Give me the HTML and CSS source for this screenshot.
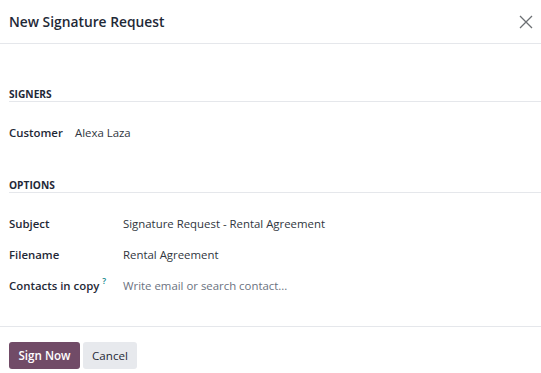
FILE: index.html
```html
<!DOCTYPE html>
<html>
<head>
<meta charset="utf-8">
<link rel="stylesheet" href="styles.css">
</head>
<body>
<div class="modal">
  <header class="modal-header">
    <h4 class="title">New Signature Request</h4>
    <svg class="close" width="14" height="14" viewBox="0 0 14 14"><path d="M1 1L13 13M13 1L1 13" stroke="#6c6f73" stroke-width="1.3" fill="none"/></svg>
  </header>
  <main class="modal-body">
    <section class="group">
      <div class="sep">SIGNERS</div>
      <div class="row signer">
        <span class="label short">Customer</span>
        <span class="value">Alexa Laza</span>
      </div>
    </section>
    <section class="group options">
      <div class="sep">OPTIONS</div>
      <div class="row">
        <span class="label">Subject</span>
        <span class="value">Signature Request - Rental Agreement</span>
      </div>
      <div class="row">
        <span class="label">Filename</span>
        <span class="value">Rental Agreement</span>
      </div>
      <div class="row">
        <span class="label">Contacts in copy<sup class="help">?</sup></span>
        <span class="value placeholder">Write email or search contact...</span>
      </div>
    </section>
  </main>
  <footer class="modal-footer">
    <button class="btn primary">Sign Now</button>
    <button class="btn secondary">Cancel</button>
  </footer>
</div>
</body>
</html>
```
FILE: styles.css
```css
* { box-sizing: border-box; }
html, body { margin: 0; padding: 0; background: #fff; }
body {
  font-family: "Open Sans", "Noto Sans", sans-serif;
  color: #374151;
  font-size: 11.4px;
}
.modal { width: 541px; height: 373px; display: flex; flex-direction: column; }
.modal-header {
  height: 44px;
  display: flex;
  align-items: center;
  justify-content: space-between;
  padding: 0 8px 0 9px;
  border-bottom: 1px solid #e5e7eb;
}
.title {
  margin: 0;
  font-size: 13.8px;
  font-weight: 600;
  color: #1f2937;
}
.modal-body { flex: 1; padding: 0 0 0 9px; display: flex; flex-direction: column; }
.group { display: flex; flex-direction: column; }
.sep {
  margin-top: 43px;
  font-size: 10.2px;
  font-weight: 700;
  color: #1f2937;
  line-height: 14px;
  border-bottom: 1px solid #e5e7eb;
}
.options .sep { margin-top: 30px; }
.row {
  display: flex;
  align-items: center;
  height: 31px;
}
.signer { margin-top: 15px; }
.options .sep + .row { margin-top: 15px; }
.label {
  width: 114px;
  font-weight: 600;
  color: #1f2937;
  white-space: nowrap;
}
.label.short { width: 66px; }
.value { color: #2f3640; }
.placeholder { color: #6b7280; }
.help { color: #017e84; font-size: 8.5px; font-weight: 600; margin-left: 3px; vertical-align: top; position: relative; top: -3px; }
.modal-footer {
  height: 47px;
  border-top: 1px solid #e5e7eb;
  display: flex;
  align-items: flex-start;
  gap: 3px;
  padding: 15px 0 0 9px;
}
.btn {
  height: 27px;
  border: none;
  border-radius: 3px;
  font-family: inherit;
  font-size: 11.6px;
  padding: 0;
  white-space: nowrap;
}
.primary { background: #714b67; color: #fff; font-weight: 600; width: 71px; }
.secondary { background: #e7e9ed; color: #1f2937; width: 54px; font-weight: 500; }
```
